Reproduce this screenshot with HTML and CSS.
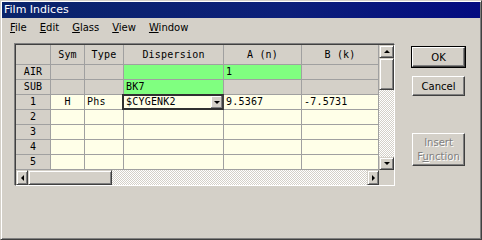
FILE: index.html
```html
<!DOCTYPE html>
<html lang="en">
<head>
    <meta charset="UTF-8">
    <title>Film Indices</title>
    <link rel="stylesheet" href="styles.css">
</head>
<body>
    <div class="window">
        <div class="titlebar">Film Indices</div>

        <div class="menubar">
            <span class="menu-item"><u>F</u>ile</span>
            <span class="menu-item"><u>E</u>dit</span>
            <span class="menu-item"><u>G</u>lass</span>
            <span class="menu-item"><u>V</u>iew</span>
            <span class="menu-item"><u>W</u>indow</span>
        </div>

        <div class="content">
            <!-- planilha de indices -->
            <div class="sheet">
                <div class="cells">
                    <div class="hd"></div>
                    <div class="hd">Sym</div>
                    <div class="hd">Type</div>
                    <div class="hd">Dispersion</div>
                    <div class="hd">A (n)</div>
                    <div class="hd">B (k)</div>

                    <div class="rh">AIR</div>
                    <div class="c gray"></div>
                    <div class="c gray"></div>
                    <div class="c green"></div>
                    <div class="c green">1</div>
                    <div class="c gray"></div>

                    <div class="rh">SUB</div>
                    <div class="c gray"></div>
                    <div class="c gray"></div>
                    <div class="c green">BK7</div>
                    <div class="c gray"></div>
                    <div class="c gray"></div>

                    <div class="rh">1</div>
                    <div class="c center">H</div>
                    <div class="c">Phs</div>
                    <div class="c combo-cell">
                        <div class="combo">
                            <span class="combo-text">$CYGENK2</span>
                            <span class="combo-btn"><span class="tri-down"></span></span>
                        </div>
                    </div>
                    <div class="c">9.5367</div>
                    <div class="c">-7.5731</div>

                    <div class="rh">2</div>
                    <div class="c"></div><div class="c"></div><div class="c"></div><div class="c"></div><div class="c"></div>
                    <div class="rh">3</div>
                    <div class="c"></div><div class="c"></div><div class="c"></div><div class="c"></div><div class="c"></div>
                    <div class="rh">4</div>
                    <div class="c"></div><div class="c"></div><div class="c"></div><div class="c"></div><div class="c"></div>
                    <div class="rh">5</div>
                    <div class="c"></div><div class="c"></div><div class="c"></div><div class="c"></div><div class="c"></div>
                </div>

                <div class="vscroll">
                    <span class="sb-btn"><span class="tri-up"></span></span>
                    <span class="sb-thumb v-thumb"></span>
                    <span class="sb-track"></span>
                    <span class="sb-btn"><span class="tri-down"></span></span>
                </div>

                <div class="hscroll">
                    <span class="sb-btn"><span class="tri-left"></span></span>
                    <span class="sb-thumb h-thumb"></span>
                    <span class="sb-track"></span>
                    <span class="sb-btn"><span class="tri-right"></span></span>
                </div>

                <div class="corner"></div>
            </div>

            <!-- botoes -->
            <div class="buttons">
                <button class="btn default">OK</button>
                <button class="btn">Cancel</button>
                <button class="btn disabled">Insert<br>F<u>u</u>nction</button>
            </div>
        </div>
    </div>
</body>
</html>
```

FILE: styles.css
```css
/* janela principal */
body {
    margin: 0;
    background: #d4d0c8;
    font-family: "DejaVu Sans", sans-serif;
}

.window {
    width: 482px;
    height: 240px;
    box-sizing: border-box;
    background: #d4d0c8;
    border: 1px solid;
    border-color: #d4d0c8 #404040 #404040 #d4d0c8;
    box-shadow: inset 1px 1px #fff, inset -1px -1px #808080;
    padding: 1px;
}

/* barra de titulo */
.titlebar {
    height: 16px;
    line-height: 15px;
    padding-left: 2px;
    color: #fff;
    font-size: 11px;
    background: linear-gradient(to right, #0a246a, #0c1f7a 60%, #030b80);
}

/* menu */
.menubar {
    display: flex;
    height: 18px;
    align-items: center;
    padding-left: 2px;
    font-size: 10px;
    color: #000;
}

.menu-item {
    padding: 0 6px;
    margin-right: 1px;
}

.content {
    display: flex;
    padding: 8px 0 0 13px;
}

/* planilha */
.sheet {
    display: grid;
    grid-template-columns: 363px 15px;
    grid-template-rows: 125px 15px;
    border: 1px solid;
    border-color: #404040 #fff #fff #404040;
    box-shadow: -1px -1px #808080, 1px 1px #d4d0c8;
    font-family: "DejaVu Sans Mono", monospace;
    font-size: 10px;
    letter-spacing: 0.2px;
}

.cells {
    display: grid;
    grid-template-columns: 35px 34px 39px 100px 78px 77px;
    grid-template-rows: 20px repeat(7, 15px);
    overflow: hidden;
}

.hd, .rh, .c {
    box-sizing: border-box;
    border-right: 1px solid #a0a0a0;
    border-bottom: 1px solid #a0a0a0;
    white-space: nowrap;
    overflow: hidden;
}

.hd {
    background: #d4d0c8;
    text-align: center;
    line-height: 19px;
    color: #000;
}

.rh {
    background: #d4d0c8;
    text-align: center;
    line-height: 14px;
}

.c {
    background: #ffffe8;
    padding-left: 2px;
    line-height: 14px;
    color: #000;
}

.c.gray {
    background: #d4d0c8;
}

.c.green {
    background: #80ff80;
}

.c.center {
    text-align: center;
    padding-left: 0;
}

.combo-cell {
    padding: 0;
    overflow: visible;
    position: relative;
}

/* caixa de selecao sobre a celula */
.combo {
    position: absolute;
    left: -2px;
    top: -1px;
    right: -1px;
    bottom: -1px;
    display: flex;
    box-sizing: border-box;
    border: 2px solid #303030;
    border-color: #303030 #404040 #303030 #303030;
    background: #ffffe8;
}

.combo-text {
    flex: 1;
    padding-left: 2px;
    line-height: 11px;
}

.combo-btn {
    width: 11px;
    display: flex;
    align-items: center;
    justify-content: center;
    background: #d4d0c8;
    box-shadow: inset -1px -1px #808080, inset 1px 1px #fff;
}

/* barras de rolagem */
.vscroll {
    display: flex;
    flex-direction: column;
}

.hscroll {
    display: flex;
}

.sb-btn {
    flex: none;
    width: 15px;
    height: 13px;
    box-sizing: border-box;
    display: flex;
    align-items: center;
    justify-content: center;
    background: #d4d0c8;
    border: 1px solid;
    border-color: #d4d0c8 #404040 #404040 #d4d0c8;
    box-shadow: inset 1px 1px #fff, inset -1px -1px #808080;
}

.hscroll .sb-btn {
    width: 12px;
    height: 15px;
}

.sb-thumb {
    flex: none;
    box-sizing: border-box;
    background: #d4d0c8;
    border: 1px solid;
    border-color: #d4d0c8 #404040 #404040 #d4d0c8;
    box-shadow: inset 1px 1px #fff, inset -1px -1px #808080;
}

.v-thumb {
    height: 32px;
}

.h-thumb {
    width: 84px;
}

.sb-track {
    flex: 1;
    background: repeating-conic-gradient(#fff 0 25%, #d4d0c8 0 50%) 0 0 / 2px 2px;
}

.corner {
    background: #d4d0c8;
}

.tri-up, .tri-down, .tri-left, .tri-right {
    width: 0;
    height: 0;
    border: 3px solid transparent;
}

.tri-up {
    border-bottom: 3px solid #000;
    border-top: 0;
}

.tri-down {
    border-top: 3px solid #000;
    border-bottom: 0;
}

.tri-left {
    border-right: 3px solid #000;
    border-left: 0;
}

.tri-right {
    border-left: 3px solid #000;
    border-right: 0;
}

/* botoes laterais */
.buttons {
    display: flex;
    flex-direction: column;
    margin-left: 17px;
    padding-top: 3px;
}

.btn {
    width: 53px;
    height: 20px;
    padding: 0;
    margin-bottom: 9px;
    font-family: "DejaVu Sans", sans-serif;
    font-size: 10px;
    color: #000;
    background: #d4d0c8;
    border: 1px solid;
    border-color: #fff #404040 #404040 #fff;
    box-shadow: inset -1px -1px #808080;
}

.btn.default {
    outline: 1px solid #000;
    border-color: #fff #404040 #404040 #fff;
}

.btn.disabled {
    height: 33px;
    margin-top: 28px;
    line-height: 14px;
    color: #808080;
    text-shadow: 1px 1px #fff;
}
```
